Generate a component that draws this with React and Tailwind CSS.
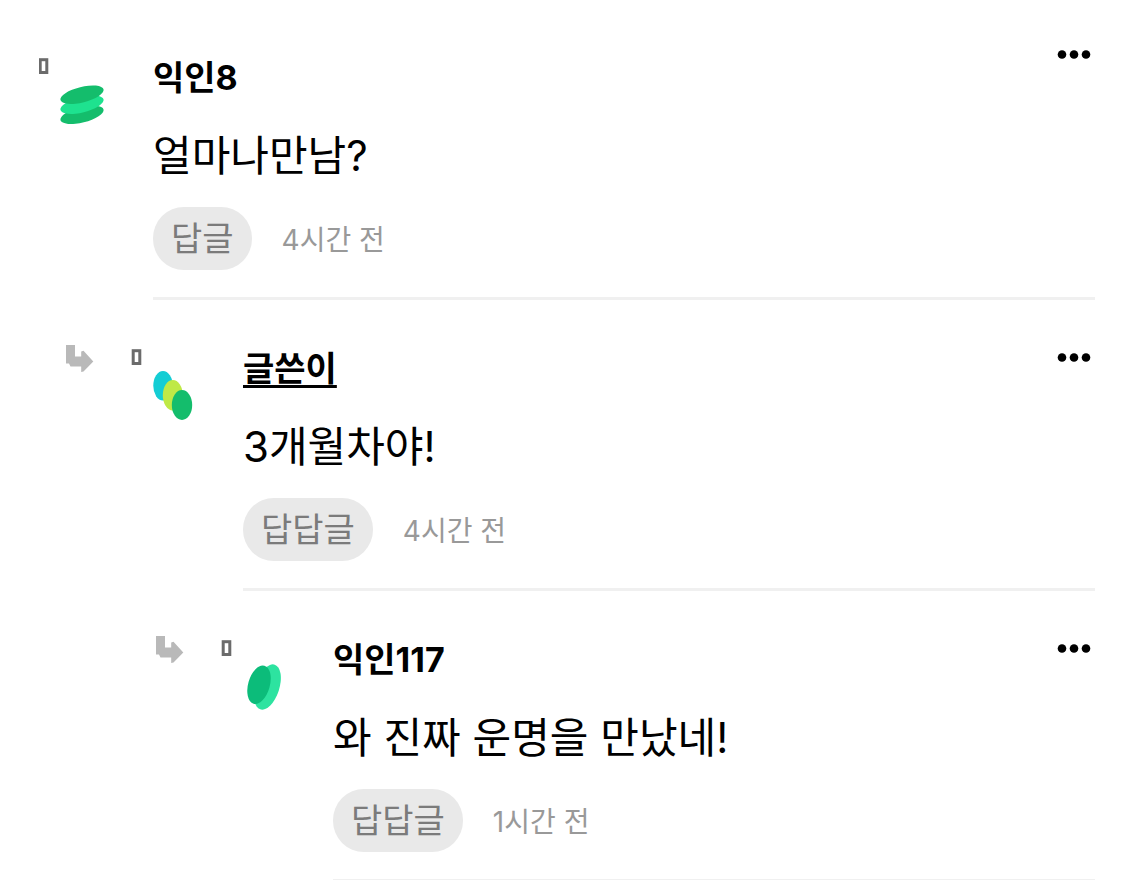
import React from 'react';

const COMMENTS = [
  { id: 1, depth: 0, name: '익인8', text: '얼마나만남?', reply: '답글', time: '4시간 전', avatar: 'stack' },
  { id: 2, depth: 1, name: '글쓴이', text: '3개월차야!', reply: '답답글', time: '4시간 전', avatar: 'chain', isWriter: true },
  { id: 3, depth: 2, name: '익인117', text: '와 진짜 운명을 만났네!', reply: '답답글', time: '1시간 전', avatar: 'leaf' },
];

const INDENT = ['pl-[39px]', 'pl-[66px]', 'pl-[156px]'];

const AVATARS = {
  stack: (
    <>
      <ellipse cx="43" cy="61.8" rx="22.2" ry="7.7" fill="#14bd6c" transform="rotate(-14 43 61.8)" />
      <ellipse cx="43" cy="51.7" rx="22.2" ry="7.7" fill="#1ee28f" transform="rotate(-14 43 51.7)" />
      <ellipse cx="43" cy="41.7" rx="22.2" ry="7.7" fill="#14bd6c" transform="rotate(-14 43 41.7)" />
    </>
  ),
  chain: (
    <>
      <ellipse cx="34" cy="41.7" rx="9.7" ry="14.8" fill="#14cdd4" />
      <ellipse cx="43.8" cy="51.3" rx="10" ry="15.3" fill="#bfe946" />
      <ellipse cx="53" cy="61" rx="10.2" ry="15" fill="#14bd6c" />
    </>
  ),
  leaf: (
    <>
      <ellipse cx="48.5" cy="52" rx="11.8" ry="23.5" fill="#2de3a0" transform="rotate(18 48.5 52)" />
      <ellipse cx="40" cy="49.7" rx="10.8" ry="19.8" fill="#0cbc7a" transform="rotate(16 40 49.7)" />
    </>
  ),
};

function Avatar({ type, depth }) {
  return (
    <svg className="mt-11 h-20 w-[114px] shrink-0" viewBox="0 0 114 80" aria-hidden="true">
      <rect x={depth === 0 ? 1.2 : 4.2} y="6.7" width="6.6" height="12.8" fill="none" stroke="#6b6b6b" strokeWidth="3" />
      {AVATARS[type]}
    </svg>
  );
}

function ReplyArrow() {
  return (
    <div className="mt-11 w-[63px] shrink-0">
      <svg className="h-7 w-7" viewBox="0 0 28 28" fill="#b9b9b9" aria-hidden="true">
        <path d="M0 1H9V12.5H15.2V7.5L17.5 6.8L27.3 17.5L17.5 27.5L15.2 28V22.5H4.5L3 19.5H0Z" />
      </svg>
    </div>
  );
}

function Comment({ comment }) {
  const { depth, name, text, reply, time, avatar, isWriter } = comment;

  return (
    <article className={`flex pr-[30px] ${INDENT[depth]}`}>
      {depth > 0 && <ReplyArrow />}
      <Avatar type={avatar} depth={depth} />

      <div className="min-w-0 flex-1 border-b-3 border-[#f0f0f0] pb-[27px]">
        <header className="flex items-start justify-between">
          <h3
            className={`mt-[45px] text-[34px] leading-[48px] font-bold ${
              isWriter ? 'underline decoration-3 underline-offset-4' : ''
            }`}
          >
            {name}
          </h3>
          <button
            type="button"
            aria-label="더보기"
            className={`mr-1 h-[26px] ${depth === 0 ? 'mt-8' : 'mt-11'}`}
          >
            <svg className="h-[26px] w-[34px]" viewBox="0 0 34 26" aria-hidden="true">
              <circle cx="5" cy="13.5" r="4.3" />
              <circle cx="17" cy="13.5" r="4.3" />
              <circle cx="29" cy="13.5" r="4.3" />
            </svg>
          </button>
        </header>

        <p className="mt-6 text-[42px] leading-[60px]">{text}</p>

        <div className="mt-[21px] flex items-center gap-[30px]">
          <button
            type="button"
            className="h-[63px] rounded-[31px] bg-[#e9e9e9] px-[18px] text-[34px] leading-[63px] text-[#7b7b7b]"
          >
            {reply}
          </button>
          <time className="pt-0.5 text-[28px] leading-[40px] text-[#999999]">{time}</time>
        </div>
      </div>
    </article>
  );
}

export default function App() {
  return (
    <main className="min-h-screen overflow-hidden bg-white pt-[9px] font-['Inter','Noto_Sans_CJK_KR',sans-serif] text-black">
      {COMMENTS.map(comment => (
        <Comment key={comment.id} comment={comment} />
      ))}
    </main>
  );
}
